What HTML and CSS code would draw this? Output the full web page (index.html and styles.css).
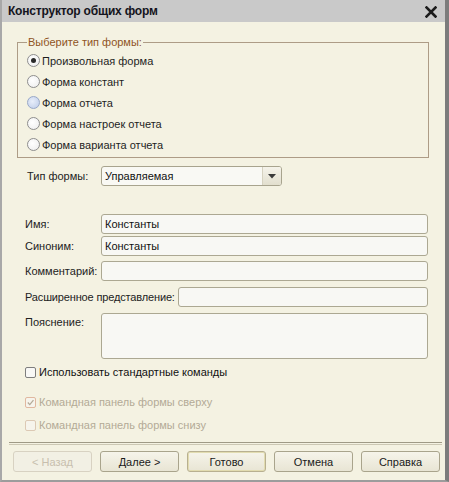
FILE: index.html
```html
<!DOCTYPE html>
<html lang="ru">
<head>
<meta charset="utf-8">
<title>Конструктор общих форм</title>
<link rel="stylesheet" href="styles.css">
</head>
<body>
<div class="window">
  <div class="titlebar">
    <span class="title">Конструктор общих форм</span>
    <span class="close">
      <svg width="12" height="12" viewBox="0 0 12 12"><path d="M1.5 1.5 L10.5 10.5 M10.5 1.5 L1.5 10.5" stroke="#1c1c1c" stroke-width="2.6" stroke-linecap="square"/></svg>
    </span>
  </div>
  <div class="content">
    <fieldset class="group">
      <legend class="group-title">Выберите тип формы:</legend>
      <div class="radio-row"><span class="radio checked"></span><span>Произвольная форма</span></div>
      <div class="radio-row"><span class="radio"></span><span>Форма констант</span></div>
      <div class="radio-row"><span class="radio hover"></span><span>Форма отчета</span></div>
      <div class="radio-row"><span class="radio"></span><span>Форма настроек отчета</span></div>
      <div class="radio-row"><span class="radio"></span><span>Форма варианта отчета</span></div>
    </fieldset>

    <div class="row row-type">
      <span class="label label-type">Тип формы:</span>
      <div class="select">
        <span class="select-value">Управляемая</span>
        <span class="select-btn">
          <svg width="8" height="5" viewBox="0 0 8 5"><path d="M0 0 H8 L4 4.5 Z" fill="#3a3a3a"/></svg>
        </span>
      </div>
    </div>

    <div class="row row-name">
      <span class="label">Имя:</span>
      <div class="input">Константы</div>
    </div>
    <div class="row row-syn">
      <span class="label">Синоним:</span>
      <div class="input">Константы</div>
    </div>
    <div class="row row-comment">
      <span class="label">Комментарий:</span>
      <div class="input"></div>
    </div>
    <div class="row row-ext">
      <span class="label label-auto">Расширенное представление:</span>
      <div class="input"></div>
    </div>
    <div class="row row-note">
      <span class="label label-top">Пояснение:</span>
      <div class="input textarea"></div>
    </div>

    <div class="check-row check-main">
      <span class="checkbox"></span><span>Использовать стандартные команды</span>
    </div>
    <div class="check-row disabled check-top">
      <span class="checkbox checked">
        <svg width="9" height="9" viewBox="0 0 10 10"><path d="M2 5 L4.2 7.3 L8.3 2.4" fill="none" stroke="#b4aa98" stroke-width="1.4"/></svg>
      </span><span>Командная панель формы сверху</span>
    </div>
    <div class="check-row disabled check-bottom">
      <span class="checkbox"></span><span>Командная панель формы снизу</span>
    </div>

    <div class="separator"></div>

    <div class="buttons">
      <button class="btn" disabled>&lt; Назад</button>
      <button class="btn">Далее &gt;</button>
      <button class="btn default">Готово</button>
      <button class="btn">Отмена</button>
      <button class="btn">Справка</button>
    </div>
  </div>
</div>
</body>
</html>
```

FILE: styles.css
```css
html, body {
  margin: 0;
  padding: 0;
  background: #f3f1e2;
}

body {
  font-family: "Liberation Sans", Arial, sans-serif;
  font-size: 11px;
  color: #1e1e1e;
}

.window {
  width: 449px;
  height: 482px;
  box-sizing: border-box;
  border-left: 2px solid #a8a8a8;
  border-right: 4px solid #7c7c7c;
  border-bottom: 2px solid #9c9c9c;
  background: #f4f2e2;
  display: flex;
  flex-direction: column;
}

.titlebar {
  height: 22px;
  background: #c9c9c9;
  display: flex;
  align-items: center;
  justify-content: space-between;
  padding: 0 8px 0 6px;
  flex: none;
}

.title {
  font-weight: bold;
  font-size: 12px;
  color: #141420;
  letter-spacing: -0.2px;
}

.close {
  display: flex;
  align-items: center;
  margin-top: 1px;
}

.content {
  padding: 13px 0 0 0;
  flex: 1;
  display: flex;
  flex-direction: column;
}

/* radio group */
.group {
  margin: 0 0 0 15px;
  width: 412px;
  box-sizing: border-box;
  border: 1px solid #ad9c86;
  padding: 1px 0 2px 9px;
  min-inline-size: 0;
}

.group-title {
  color: #8f5424;
  padding: 0 1px;
  margin-left: 0;
  line-height: 14px;
}

.radio-row {
  height: 21px;
  display: flex;
  align-items: center;
  gap: 2px;
}

.radio {
  width: 11px;
  height: 11px;
  border: 1px solid #8e8e8e;
  border-radius: 50%;
  background: radial-gradient(circle at 40% 40%, #ffffff, #ececec);
  position: relative;
  flex: none;
}

.radio.checked::after {
  content: "";
  position: absolute;
  left: 3px;
  top: 3px;
  width: 5px;
  height: 5px;
  border-radius: 50%;
  background: #2a2a2a;
}

.radio.hover {
  border-color: #98a8c8;
  background: radial-gradient(circle at 40% 40%, #e8eefa, #bccbe8);
}

/* form fields */
.row {
  display: flex;
  align-items: center;
  padding: 0 17px 0 21px;
}

.label {
  width: 78px;
  flex: none;
  padding-left: 2px;
  box-sizing: border-box;
  color: #222;
}

.label-type {
  padding-left: 4px;
}

.label-auto {
  width: auto;
  margin-right: 3px;
  letter-spacing: -0.15px;
}

.label-top {
  align-self: flex-start;
  padding-top: 3px;
}

.row-type {
  margin-top: 8px;
}

.select {
  width: 181px;
  height: 20px;
  box-sizing: border-box;
  border: 1px solid #a8a48e;
  border-radius: 3px;
  background: #f9f9f4;
  display: flex;
  align-items: center;
}

.select-value {
  flex: 1;
  padding-left: 3px;
  color: #111;
}

.select-btn {
  width: 18px;
  height: 18px;
  border-left: 1px solid #d6d2c0;
  background: linear-gradient(#f5f3ea, #e2dfce);
  border-radius: 0 2px 2px 0;
  display: flex;
  align-items: center;
  justify-content: center;
}

.input {
  flex: 1;
  height: 20px;
  box-sizing: border-box;
  border: 1px solid #aca892;
  border-radius: 3px;
  background: #f8f8f4;
  padding: 2px 3px 0;
  line-height: 15px;
  color: #111;
}

.textarea {
  height: 46px;
}

.row-name { margin-top: 28px; }
.row-syn { margin-top: 2px; }
.row-comment { margin-top: 5px; }
.row-ext { margin-top: 6px; }
.row-note { margin-top: 6px; }

/* check boxes */
.check-row {
  display: flex;
  align-items: center;
  gap: 3px;
  height: 16px;
  padding-left: 23px;
  color: #111;
}

.checkbox {
  width: 9px;
  height: 9px;
  border: 1px solid #7e7e7e;
  border-radius: 2px;
  background: #f8f8f6;
  flex: none;
  display: flex;
  align-items: center;
  justify-content: center;
}

.check-main { margin-top: 5px; }
.check-top { margin-top: 14px; }
.check-bottom { margin-top: 7px; }

.check-row.disabled {
  color: #b3aa96;
}

.check-row.disabled .checkbox {
  border-color: #dcc9b4;
  background: #f6f4ec;
}

.check-row.disabled .checkbox.checked {
  border-color: #e0b8a0;
}

/* dialog footer */
.separator {
  margin: 9px 0 0 7px;
  width: 433px;
  height: 1px;
  border-top: 1px solid #9f9a86;
  border-bottom: 1px solid #ccc8b4;
}

.buttons {
  display: flex;
  gap: 8px;
  padding-left: 11px;
  margin-top: 6px;
}

.btn {
  width: 79px;
  height: 21px;
  box-sizing: border-box;
  border: 1px solid #a9a48c;
  border-radius: 3px;
  background: linear-gradient(#f6f4ea, #e8e5d4);
  font-family: "Liberation Sans", Arial, sans-serif;
  font-size: 11px;
  color: #1a1a1a;
  padding: 0;
}

.btn:disabled {
  color: #c8bfae;
  border-color: #d8d2c2;
  background: #f2f0e4;
}

.btn.default {
  border: 1px solid #b8b090;
  box-shadow: inset 0 0 0 1px #e2dcb0;
}
```
